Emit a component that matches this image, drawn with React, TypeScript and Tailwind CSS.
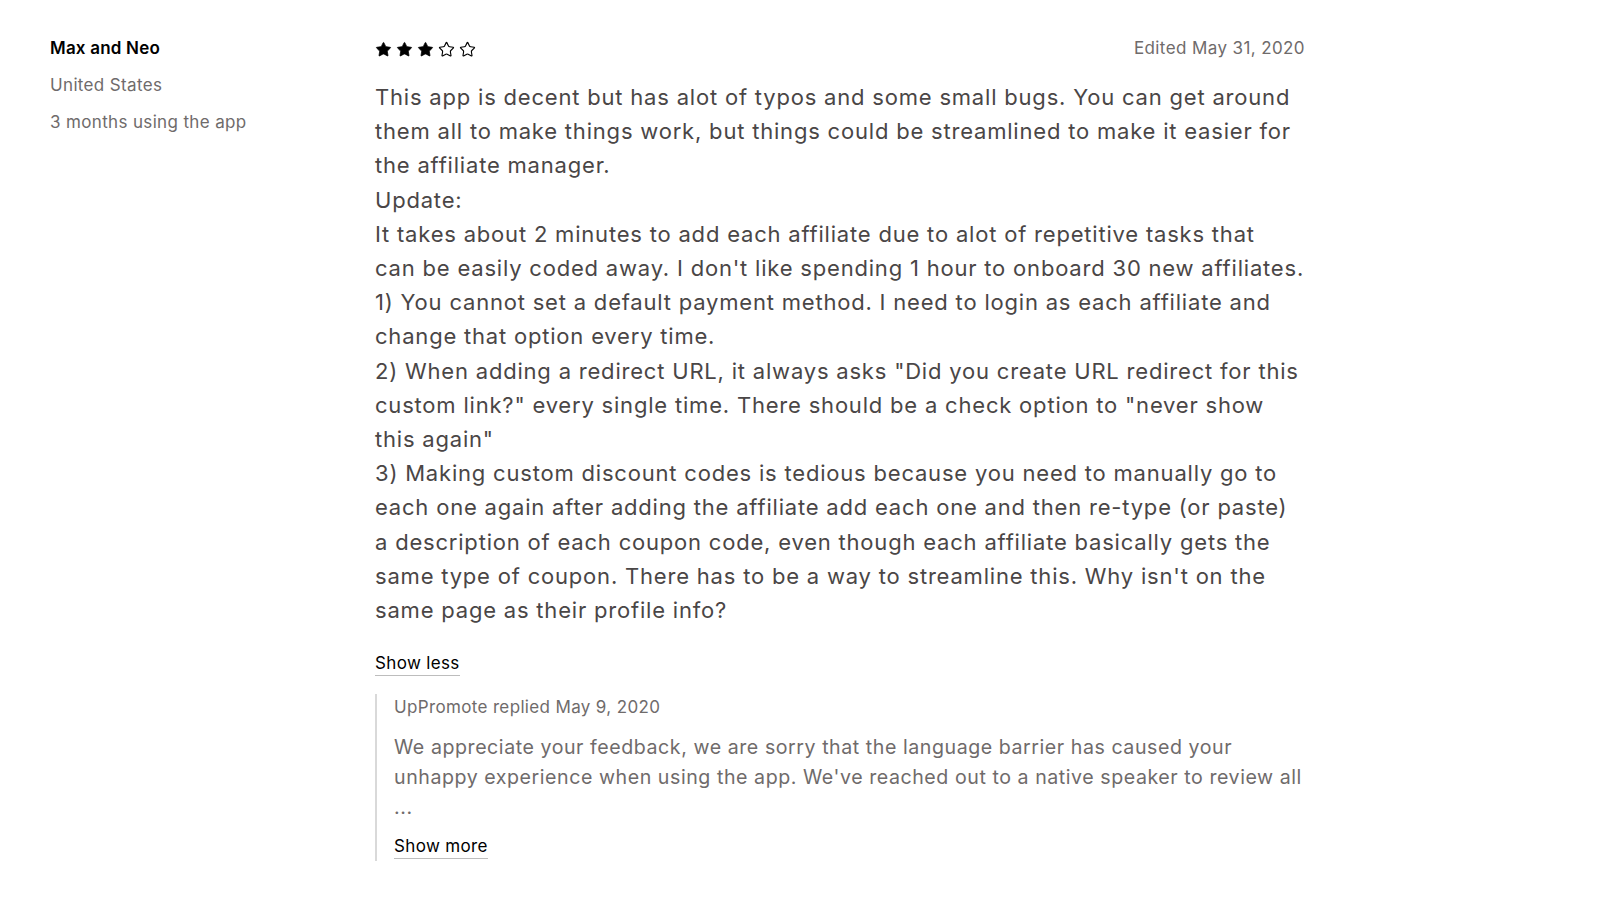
import { Star } from 'lucide-react';

// lines as they break in the original layout
const lines = [
  'This app is decent but has alot of typos and some small bugs. You can get around',
  'them all to make things work, but things could be streamlined to make it easier for',
  'the affiliate manager.',
  'Update:',
  'It takes about 2 minutes to add each affiliate due to alot of repetitive tasks that',
  "can be easily coded away. I don't like spending 1 hour to onboard 30 new affiliates.",
  '1) You cannot set a default payment method. I need to login as each affiliate and',
  'change that option every time.',
  '2) When adding a redirect URL, it always asks "Did you create URL redirect for this',
  'custom link?" every single time. There should be a check option to "never show',
  'this again"',
  '3) Making custom discount codes is tedious because you need to manually go to',
  'each one again after adding the affiliate add each one and then re-type (or paste)',
  'a description of each coupon code, even though each affiliate basically gets the',
  "same type of coupon. There has to be a way to streamline this. Why isn't on the",
  'same page as their profile info?',
];

function Stars({ rating }: { rating: number }) {
  return (
    <div className="flex items-center gap-[4px]">
      {[1, 2, 3, 4, 5].map(i => (
        <Star
          key={i}
          size={17}
          strokeWidth={i <= rating ? 1 : 1.6}
          className={i <= rating ? 'fill-black text-black' : 'fill-white text-black'}
        />
      ))}
    </div>
  );
}

export default function App() {
  return (
    <div className="min-h-screen bg-white font-['Inter','Liberation_Sans',sans-serif]">
      <div className="flex pl-[50px] pt-[36px]">
        <div className="w-[325px] shrink-0">
          <div className="text-[17px] leading-[24px] font-semibold tracking-[0.2px] text-black">Max and Neo</div>
          <div className="mt-[13px] text-[17px] leading-[24px] tracking-[0.35px] text-[#6f6b6b]">United States</div>
          <div className="mt-[13px] text-[17px] leading-[24px] tracking-[0.35px] text-[#6f6b6b]">3 months using the app</div>
        </div>
        <div className="w-[930px]">
          <div className="flex items-center justify-between h-[26px]">
            <Stars rating={3} />
            <span className="text-[17px] tracking-[0.4px] text-[#6f6b6b]">Edited May 31, 2020</span>
          </div>
          <div className="mt-[18px] text-[22px] leading-[34.2px] tracking-[0.8px] text-[#4a4646]">
            {lines.map((l, i) => (
              <div key={i} className="whitespace-nowrap">{l}</div>
            ))}
          </div>
          <button className="mt-[24px] text-[17px] leading-[24px] tracking-[0.35px] text-black border-b border-[#bdbdbd]">Show less</button>
          <div className="mt-[18px] border-l-2 border-[#d9d9d9] pl-[17px] pb-[2px]">
            <div className="text-[17px] leading-[24px] tracking-[0.35px] text-[#6f6b6b] pt-[1px]">UpPromote replied May 9, 2020</div>
            <div className="mt-[13px] text-[19.6px] leading-[30px] tracking-[0.55px] text-[#6f6b6b]">
              <div className="whitespace-nowrap">We appreciate your feedback, we are sorry that the language barrier has caused your</div>
              <div className="whitespace-nowrap">unhappy experience when using the app. We've reached out to a native speaker to review all</div>
              <div>...</div>
            </div>
            <button className="mt-[12px] text-[17px] leading-[24px] tracking-[0.35px] text-black border-b border-[#bdbdbd]">Show more</button>
          </div>
        </div>
      </div>
    </div>
  );
}
